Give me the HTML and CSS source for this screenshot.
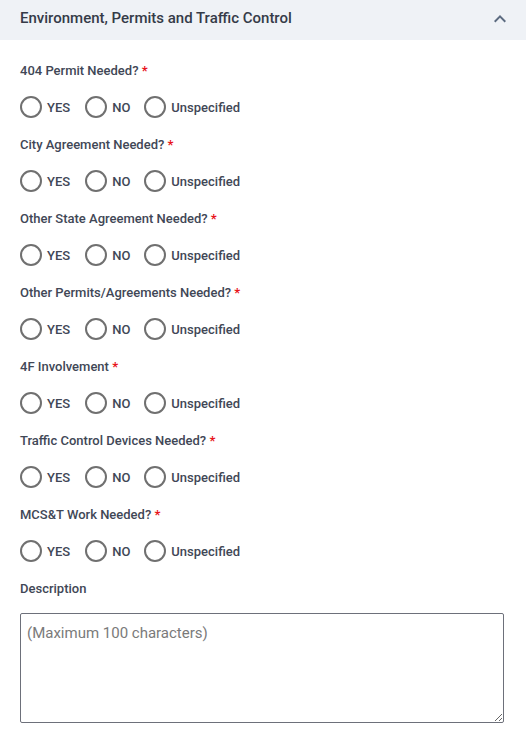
FILE: index.html
```
<!DOCTYPE html>
<html>
<head>
<meta charset="utf-8">
<link rel="stylesheet" href="styles.css">
</head>
<body>
<div class="panel">
  <div class="header">
    <span class="title">Environment, Permits and Traffic Control</span>
    <svg class="chev" width="24" height="24" viewBox="0 0 24 24"><path d="M12 8l-6 6 1.41 1.41L12 10.83l4.59 4.58L18 14z" fill="#5c6b80"/></svg>
  </div>
  <div class="body">
    <div class="field">
      <div class="label">404 Permit Needed? <span class="req">*</span></div>
      <div class="radios">
        <label class="opt"><span class="circle"></span>YES</label>
        <label class="opt"><span class="circle"></span>NO</label>
        <label class="opt"><span class="circle"></span>Unspecified</label>
      </div>
    </div>
    <div class="field">
      <div class="label">City Agreement Needed? <span class="req">*</span></div>
      <div class="radios">
        <label class="opt"><span class="circle"></span>YES</label>
        <label class="opt"><span class="circle"></span>NO</label>
        <label class="opt"><span class="circle"></span>Unspecified</label>
      </div>
    </div>
    <div class="field">
      <div class="label">Other State Agreement Needed? <span class="req">*</span></div>
      <div class="radios">
        <label class="opt"><span class="circle"></span>YES</label>
        <label class="opt"><span class="circle"></span>NO</label>
        <label class="opt"><span class="circle"></span>Unspecified</label>
      </div>
    </div>
    <div class="field">
      <div class="label">Other Permits/Agreements Needed? <span class="req">*</span></div>
      <div class="radios">
        <label class="opt"><span class="circle"></span>YES</label>
        <label class="opt"><span class="circle"></span>NO</label>
        <label class="opt"><span class="circle"></span>Unspecified</label>
      </div>
    </div>
    <div class="field">
      <div class="label">4F Involvement <span class="req">*</span></div>
      <div class="radios">
        <label class="opt"><span class="circle"></span>YES</label>
        <label class="opt"><span class="circle"></span>NO</label>
        <label class="opt"><span class="circle"></span>Unspecified</label>
      </div>
    </div>
    <div class="field">
      <div class="label">Traffic Control Devices Needed? <span class="req">*</span></div>
      <div class="radios">
        <label class="opt"><span class="circle"></span>YES</label>
        <label class="opt"><span class="circle"></span>NO</label>
        <label class="opt"><span class="circle"></span>Unspecified</label>
      </div>
    </div>
    <div class="field">
      <div class="label">MCS&amp;T Work Needed? <span class="req">*</span></div>
      <div class="radios">
        <label class="opt"><span class="circle"></span>YES</label>
        <label class="opt"><span class="circle"></span>NO</label>
        <label class="opt"><span class="circle"></span>Unspecified</label>
      </div>
    </div>
    <div class="label">Description</div>
    <textarea class="desc" placeholder="(Maximum 100 characters)"></textarea>
  </div>
</div>
</body>
</html>
```
FILE: styles.css
```
html, body {
  margin: 0;
  padding: 0;
  background: #ffffff;
  font-family: Roboto, "Liberation Sans", sans-serif;
}
.header {
  height: 40px;
  box-sizing: border-box;
  background: #eff2f6;
  display: flex;
  align-items: center;
  justify-content: space-between;
  padding: 0 14px 4px 20px;
}
.title {
  font-size: 15px;
  color: #353b48;
  font-weight: 500;
}
.chev {
  display: block;
  margin-top: 2px;
}
.body {
  padding: 21px 22px 0 20px;
}
.field {
  margin-bottom: 17px;
}
.label {
  font-size: 13px;
  line-height: 20px;
  font-weight: 500;
  color: #414756;
}
.req {
  color: #e8141b;
  font-weight: 700;
}
.radios {
  display: flex;
  margin-top: 15px;
  height: 22px;
  align-items: center;
}
.opt {
  display: flex;
  align-items: center;
  font-size: 13px;
  font-weight: 500;
  color: #414756;
  margin-right: 15px;
}
.opt + .opt {
  margin-right: 14px;
}
.circle {
  width: 18px;
  height: 18px;
  border: 2px solid #707070;
  border-radius: 50%;
  margin-right: 5px;
}
.desc {
  display: block;
  box-sizing: border-box;
  width: 484px;
  height: 110px;
  margin-top: 14px;
  border: 1px solid #6d707a;
  border-radius: 2px;
  padding: 10px 6px;
  font-family: Roboto, "Liberation Sans", sans-serif;
  font-size: 15px;
  color: #333;
  resize: vertical;
}
.desc::placeholder {
  color: #7a7a7a;
}
```
